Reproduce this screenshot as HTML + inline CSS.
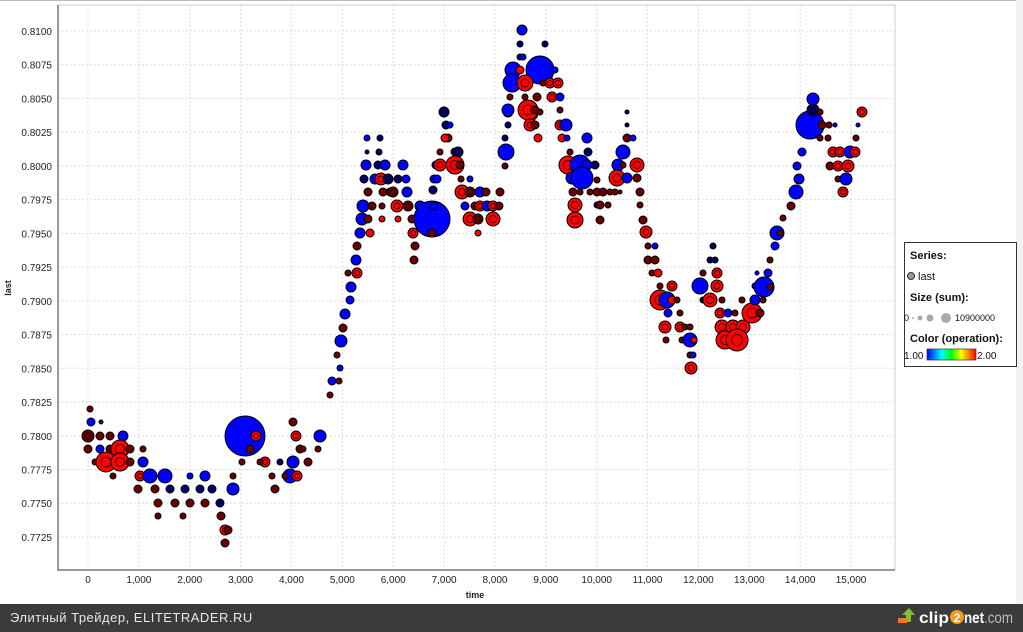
<!DOCTYPE html>
<html><head><meta charset="utf-8"><style>
body{margin:0;width:1023px;height:632px;overflow:hidden;background:#fff;font-family:"Liberation Sans",sans-serif;position:relative}
svg{position:absolute;left:0;top:0}
</style></head><body>
<svg width="1023" height="632" id="s" xmlns="http://www.w3.org/2000/svg" font-family="Liberation Sans, sans-serif">
<line x1="0" y1="0.5" x2="1023" y2="0.5" stroke="#bbb"/>
<rect x="1016" y="0" width="7" height="604" fill="#f2f2f2"/>
<g id="grid" stroke="#ddd" stroke-dasharray="2,2"></g>
<rect x="58" y="5" width="837" height="565" fill="none" stroke="#ccc"/>
<line x1="58" y1="5" x2="58" y2="571" stroke="#999" stroke-width="2"/>
<line x1="58" y1="570" x2="895" y2="570" stroke="#999" stroke-width="2"/>
<g id="lab" font-size="10" fill="#222"></g>
<text x="475" y="598" font-size="9" font-weight="bold" fill="#222" text-anchor="middle">time</text>
<text transform="translate(11,288) rotate(-90)" font-size="9" font-weight="bold" fill="#222" text-anchor="middle">last</text>
<g id="b" stroke="#000" stroke-width="1"></g>
<rect x="904.5" y="242.5" width="112" height="124" fill="#fff" stroke="#333"/>
<text x="910" y="259" font-size="11" font-weight="bold" fill="#111">Series:</text>
<circle cx="911" cy="276" r="3.5" fill="#999" stroke="#333"/>
<text x="918" y="280" font-size="11" fill="#111">last</text>
<text x="910" y="301" font-size="11" font-weight="bold" fill="#111">Size (sum):</text>
<text x="904" y="321" font-size="9" fill="#111">0</text>
<circle cx="913" cy="318" r="1" fill="#aaa"/><circle cx="920" cy="318" r="2.5" fill="#aaa"/><circle cx="930" cy="318" r="3.5" fill="#aaa"/><circle cx="946" cy="318" r="5" fill="#aaa"/>
<text x="955" y="321" font-size="9" fill="#111">10900000</text>
<text x="910" y="342" font-size="11" font-weight="bold" fill="#111">Color (operation):</text>
<defs><linearGradient id="g"><stop offset="0" stop-color="#0000ff"/><stop offset=".3" stop-color="#00ffff"/><stop offset=".5" stop-color="#00ff00"/><stop offset=".7" stop-color="#ffff00"/><stop offset="1" stop-color="#ff0000"/></linearGradient></defs>
<text x="904" y="359" font-size="10" fill="#111">1.00</text>
<rect x="927" y="349" width="49" height="11" fill="url(#g)" stroke="#333" stroke-width=".7"/>
<text x="977" y="359" font-size="10" fill="#111">2.00</text>
<rect x="0" y="604" width="1023" height="28" fill="#3b3b3b"/>
<text x="10" y="622" font-size="13" fill="#e8e8e8" letter-spacing=".5">Элитный Трейдер, ELITETRADER.RU</text>
<path d="M909 608 L902 615 H906 V622 H911 V615 H915 Z" fill="#7cc22a"/>
<rect x="898" y="618" width="9" height="5" fill="#f07a1a"/>
<text x="919" y="623" font-size="16" font-weight="bold" fill="#fff" textLength="30" lengthAdjust="spacingAndGlyphs">clip</text>
<circle cx="957" cy="617" r="7" fill="#f39a1e"/>
<text x="957" y="622" font-size="12" font-weight="bold" fill="#fff" text-anchor="middle">2</text>
<text x="964" y="623" font-size="16" font-weight="bold" fill="#fff" textLength="49" lengthAdjust="spacingAndGlyphs">net<tspan fill="#bbb" font-weight="normal">.com</tspan></text>
</svg>
<script>
var NS="http://www.w3.org/2000/svg";
function el(p,t,a,tx){var e=document.createElementNS(NS,t);for(var k in a)e.setAttribute(k,a[k]);if(tx)e.textContent=tx;document.getElementById(p).appendChild(e);}
for(var i=0;i<=15;i++){var x=88+i*50.87;el("grid","line",{x1:x,y1:5,x2:x,y2:570});el("lab","text",{x:x,y:583,"text-anchor":"middle"},i==0?"0":(i+",000"));}
for(var j=0;j<=15;j++){var y=31+j*33.73;el("grid","line",{x1:58,y1:y,x2:895,y2:y});el("lab","text",{x:52,y:y+4,"text-anchor":"end"},(0.81-j*0.0025).toFixed(4));}
var C={b:"#0000ff",r:"#ff0000",d:"#6a0000",n:"#00006a"};
var B="88,436,d,6;100,436,d,4;110,436,d,4;123,436,b,5;90,409,d,3;91,422,b,4;101,422,d,2;88,449,d,4;100,449,b,4;110,449,d,4;120,449,r,9;130,449,d,4;143,449,d,3;95,462,d,3;106,462,r,10;120,462,r,9;130,462,d,4;143,462,b,5;113,476,d,3;140,476,r,5;150,476,b,7;165,476,b,7;190,476,b,3;205,476,b,5;233,476,d,3;138,489,d,4;155,489,d,4;170,489,n,4;185,489,n,4;200,489,n,4;212,489,n,4;233,489,b,6;158,503,d,4;175,503,d,4;190,503,d,4;205,503,d,4;220,503,n,4;158,516,d,3;183,516,d,3;221,516,d,4;225,530,r,5;228,530,d,4;225,543,d,4;245,436,b,20;256,436,r,5;250,449,d,4;242,462,d,3;293,422,d,4;296,436,r,5;300,449,d,4;293,462,b,6;290,476,b,7;297,476,r,5;275,489,d,4;285,476,d,3;265,462,r,5;272,476,d,3;260,462,d,3;320,436,b,6;318,449,d,3;308,462,d,4;303,449,d,3;280,462,n,3;"+
"330,395,d,3;332,381,b,4;339,381,d,3;340,368,b,3;337,355,d,3;341,341,b,6;343,328,d,4;345,314,b,5;350,300,b,4;351,287,b,5;357,273,r,5;348,273,d,3;356,260,b,5;357,246,d,4;360,233,b,5;370,233,r,4;362,219,b,6;368,219,d,4;382,219,r,3;398,219,r,3;412,219,d,4;363,206,b,6;372,206,d,4;382,206,d,3;397,206,r,6;408,206,d,5;420,206,b,5;368,192,d,4;383,192,d,4;390,192,d,4;393,192,d,5;407,192,b,5;364,179,n,4;375,179,b,5;381,179,r,6;388,179,n,5;398,179,n,4;406,179,b,4;366,165,b,5;378,165,n,4;385,165,b,5;403,165,b,5;367,152,n,2;379,152,n,3;367,138,b,3;380,138,n,3;"+
"432,219,b,18;434,206,b,4;432,233,d,4;413,233,r,5;415,246,d,4;414,260,d,4;433,190,n,4;434,179,b,4;436,165,b,4;444,112,n,5;446,125,n,4;450,125,b,3;448,138,d,4;445,138,r,4;440,152,d,3;455,152,d,4;458,152,n,5;440,165,r,6;455,165,r,9;460,165,d,4;437,179,b,4;461,179,d,3;470,179,b,3;462,192,r,7;470,192,d,5;480,192,b,5;486,192,d,4;500,192,d,4;465,206,b,4;475,206,d,4;480,206,r,5;487,206,b,5;493,206,r,5;499,206,d,4;470,219,r,7;478,219,d,5;493,219,r,7;478,233,r,3;508,112,b,5;508,125,n,3;505,138,n,3;506,152,b,8;505,166,d,3;530,113,r,8;535,112,d,4;540,112,d,3;531,124,d,5;538,138,r,4;"+
"522,30,b,5;520,44,n,3;545,44,n,3;520,57,n,3;523,57,b,3;513,70,b,8;540,70,b,14;520,70,r,4;555,70,b,3;512,83,b,9;525,83,r,8;550,83,r,5;558,83,r,5;543,83,d,3;510,97,d,3;525,97,d,3;537,97,d,4;552,97,r,5;560,97,b,4;508,110,b,6;528,110,r,10;535,110,d,4;560,110,d,3;530,125,r,6;535,125,d,4;560,125,r,5;566,125,b,6;562,138,r,4;567,138,b,3;587,138,b,5;588,152,n,4;570,152,d,3;568,165,r,9;580,165,b,10;587,165,b,5;595,165,n,4;572,178,b,6;582,178,b,11;597,180,d,3;573,192,d,4;580,192,d,3;590,192,d,3;597,192,d,4;603,192,d,4;610,192,d,3;615,192,d,3;620,192,d,2;575,205,r,7;597,205,n,3;600,205,d,4;608,205,d,3;575,220,r,8;600,220,d,4;623,152,b,7;618,165,b,6;623,165,d,3;617,178,r,8;627,178,b,5;637,165,r,7;627,138,d,4;633,138,b,3;627,125,n,2;627,112,n,2;637,178,d,4;640,192,d,4;640,205,d,3;643,220,d,4;646,232,r,6;"+
"648,246,d,3;655,246,b,3;648,260,d,4;655,260,d,4;652,273,d,3;658,273,r,4;660,286,d,3;672,286,r,5;660,300,r,10;667,300,b,8;672,300,r,4;677,300,d,3;668,313,b,4;680,313,d,3;665,327,r,6;680,327,r,5;685,327,d,3;690,327,d,3;666,340,d,3;682,340,d,3;690,340,b,7;694,340,r,3;690,355,d,3;693,355,b,3;691,368,r,6;713,246,n,3;710,260,n,3;715,260,n,3;703,273,d,3;717,273,r,5;700,286,b,8;717,286,r,6;703,300,n,3;710,300,r,7;722,300,d,3;720,313,r,5;728,313,b,4;735,313,d,3;722,327,r,7;733,327,r,7;743,327,r,7;725,340,r,9;733,340,d,3;737,340,r,11;752,313,r,10;760,313,d,4;742,300,d,3;755,300,b,5;763,300,d,3;755,286,b,3;764,287,b,10;770,287,d,3;768,273,b,4;757,273,b,2;"+
"770,260,d,3;775,246,b,4;777,233,b,7;780,233,d,3;783,218,d,3;791,206,d,4;796,192,b,7;799,179,b,5;797,166,b,4;802,152,b,4;810,125,b,14;813,110,n,6;820,112,d,3;822,125,d,4;829,125,d,3;835,125,b,2;820,138,d,3;828,138,d,3;862,112,r,5;858,125,b,2;856,138,d,3;833,152,r,5;840,152,r,5;850,152,b,6;855,152,r,5;830,166,d,4;838,166,r,5;848,166,r,6;838,179,d,3;846,179,b,6;843,192,r,5;813,99,b,6";
B.split(";").forEach(function(s){var p=s.split(",");if(p.length<4)return;var r=+p[3];el("b","circle",{cx:p[0],cy:p[1],r:r,fill:C[p[2]]});if(r>=5&&p[2]!="b")el("b","circle",{cx:p[0],cy:p[1],r:r*0.5,fill:"none","stroke-width":".7"});});
</script>
</body></html>
